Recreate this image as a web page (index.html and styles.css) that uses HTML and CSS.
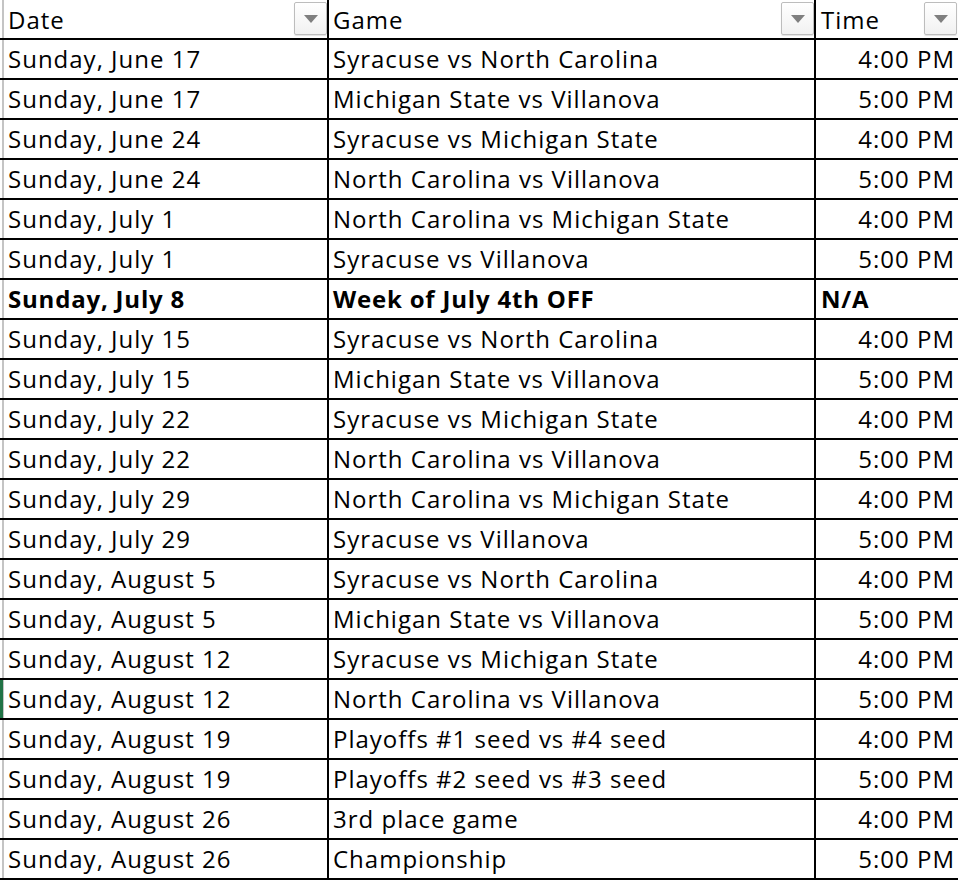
FILE: index.html
```html
<!DOCTYPE html>
<html>
<head>
<meta charset="utf-8">
<link rel="stylesheet" href="styles.css">
</head>
<body>
<div class="sheet">
  <div class="row head">
    <div class="cell c-date"><span class="txt">Date</span><span class="dd"></span></div>
    <div class="cell c-game"><span class="txt">Game</span><span class="dd"></span></div>
    <div class="cell c-time"><span class="txt">Time</span><span class="dd dd-last"></span></div>
  </div>
  <div class="row"><div class="cell c-date">Sunday, June 17</div><div class="cell c-game">Syracuse vs North Carolina</div><div class="cell c-time">4:00 PM</div></div>
  <div class="row"><div class="cell c-date">Sunday, June 17</div><div class="cell c-game">Michigan State vs Villanova</div><div class="cell c-time">5:00 PM</div></div>
  <div class="row"><div class="cell c-date">Sunday, June 24</div><div class="cell c-game">Syracuse vs Michigan State</div><div class="cell c-time">4:00 PM</div></div>
  <div class="row"><div class="cell c-date">Sunday, June 24</div><div class="cell c-game">North Carolina vs Villanova</div><div class="cell c-time">5:00 PM</div></div>
  <div class="row"><div class="cell c-date">Sunday, July 1</div><div class="cell c-game">North Carolina vs Michigan State</div><div class="cell c-time">4:00 PM</div></div>
  <div class="row"><div class="cell c-date">Sunday, July 1</div><div class="cell c-game">Syracuse vs Villanova</div><div class="cell c-time">5:00 PM</div></div>
  <div class="row bold"><div class="cell c-date">Sunday, July 8</div><div class="cell c-game">Week of July 4th OFF</div><div class="cell c-time left">N/A</div></div>
  <div class="row"><div class="cell c-date">Sunday, July 15</div><div class="cell c-game">Syracuse vs North Carolina</div><div class="cell c-time">4:00 PM</div></div>
  <div class="row"><div class="cell c-date">Sunday, July 15</div><div class="cell c-game">Michigan State vs Villanova</div><div class="cell c-time">5:00 PM</div></div>
  <div class="row"><div class="cell c-date">Sunday, July 22</div><div class="cell c-game">Syracuse vs Michigan State</div><div class="cell c-time">4:00 PM</div></div>
  <div class="row"><div class="cell c-date">Sunday, July 22</div><div class="cell c-game">North Carolina vs Villanova</div><div class="cell c-time">5:00 PM</div></div>
  <div class="row"><div class="cell c-date">Sunday, July 29</div><div class="cell c-game">North Carolina vs Michigan State</div><div class="cell c-time">4:00 PM</div></div>
  <div class="row"><div class="cell c-date">Sunday, July 29</div><div class="cell c-game">Syracuse vs Villanova</div><div class="cell c-time">5:00 PM</div></div>
  <div class="row"><div class="cell c-date">Sunday, August 5</div><div class="cell c-game">Syracuse vs North Carolina</div><div class="cell c-time">4:00 PM</div></div>
  <div class="row"><div class="cell c-date">Sunday, August 5</div><div class="cell c-game">Michigan State vs Villanova</div><div class="cell c-time">5:00 PM</div></div>
  <div class="row"><div class="cell c-date">Sunday, August 12</div><div class="cell c-game">Syracuse vs Michigan State</div><div class="cell c-time">4:00 PM</div></div>
  <div class="row selected"><div class="cell c-date">Sunday, August 12</div><div class="cell c-game">North Carolina vs Villanova</div><div class="cell c-time">5:00 PM</div></div>
  <div class="row"><div class="cell c-date">Sunday, August 19</div><div class="cell c-game">Playoffs #1 seed vs #4 seed</div><div class="cell c-time">4:00 PM</div></div>
  <div class="row"><div class="cell c-date">Sunday, August 19</div><div class="cell c-game">Playoffs #2 seed vs #3 seed</div><div class="cell c-time">5:00 PM</div></div>
  <div class="row"><div class="cell c-date">Sunday, August 26</div><div class="cell c-game">3rd place game</div><div class="cell c-time">4:00 PM</div></div>
  <div class="row"><div class="cell c-date">Sunday, August 26</div><div class="cell c-game">Championship</div><div class="cell c-time">5:00 PM</div></div>
</div>
</body>
</html>
```
FILE: styles.css
```css
html, body {
  margin: 0;
  padding: 0;
  background: #fff;
}
.sheet {
  width: 958px;
  font-family: "Open Sans", Lato, sans-serif;
  font-size: 24px;
  letter-spacing: 1px;
  color: #000;
  background: linear-gradient(to right, transparent 2px, #c4c4c4 2px, #c4c4c4 4px, transparent 4px);
}
.row {
  display: flex;
  height: 40px;
  box-sizing: border-box;
  border-bottom: 2px solid #000;
}
.row.bold {
  font-weight: 700;
  letter-spacing: 0.8px;
}
.row.selected .c-date {
  background: linear-gradient(to right, #217346 0, #217346 3px, transparent 3px);
}
.cell {
  box-sizing: border-box;
  height: 38px;
  display: flex;
  align-items: flex-end;
  padding-bottom: 5px;
  line-height: 28px;
  white-space: nowrap;
  overflow: hidden;
}
.c-date {
  width: 329px;
  padding-left: 8px;
  border-right: 2px solid #000;
}
.c-game {
  width: 487px;
  padding-left: 4px;
  border-right: 2px solid #000;
}
.c-time {
  flex: 1;
  justify-content: flex-end;
  padding-right: 3px;
}
.c-time.left {
  justify-content: flex-start;
  padding-left: 5px;
}
.head .cell {
  padding-bottom: 4px;
}
.head .c-time {
  justify-content: flex-start;
  padding-left: 5px;
  padding-right: 1px;
}
.dd {
  align-self: flex-start;
  margin-top: 2px;
  margin-left: auto;
  margin-right: 0;
  width: 33px;
  height: 33px;
  box-sizing: border-box;
  border: 1px solid #bdbdbd;
  border-radius: 2px;
  box-shadow: 0 1px 1px rgba(0, 0, 0, 0.12);
  background: linear-gradient(#ffffff, #f1f1f1);
  display: flex;
  align-items: center;
  justify-content: center;
}
.dd::after {
  content: "";
  width: 0;
  height: 0;
  margin-top: 1px;
  border-left: 7px solid transparent;
  border-right: 7px solid transparent;
  border-top: 8px solid #7f7f7f;
}
```
